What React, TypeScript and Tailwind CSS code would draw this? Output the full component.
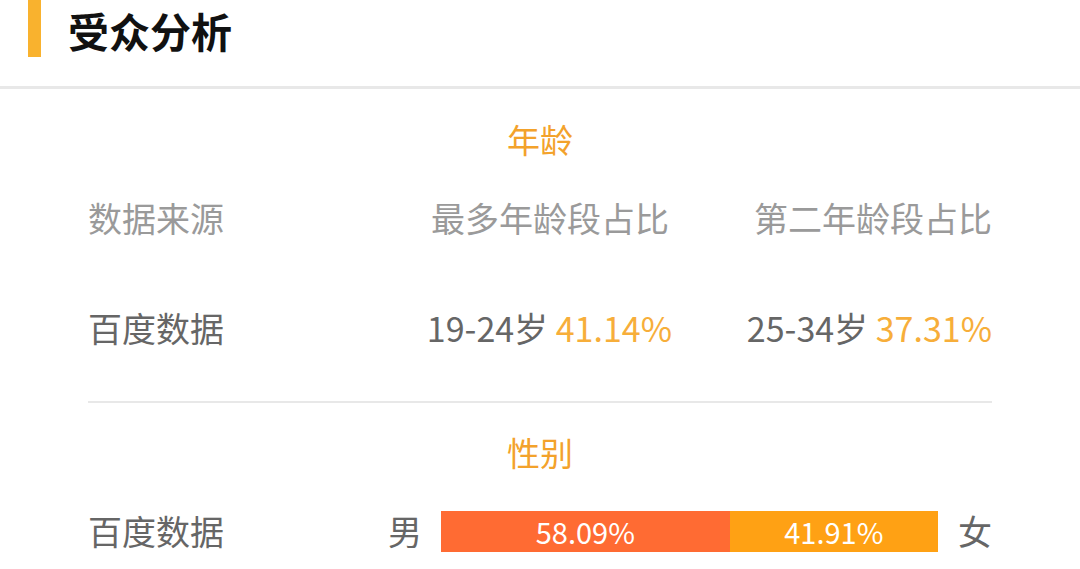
import React from 'react';

const font = { fontFamily: '"Noto Sans CJK SC", "Noto Sans", sans-serif' };

type AgeRow = { source: string; first: [string, string]; second: [string, string] };

const ageRows: AgeRow[] = [
  { source: '百度数据', first: ['19-24岁', '41.14%'], second: ['25-34岁', '37.31%'] },
];

const male = 58.09;
const female = 41.91;

export default function App() {
  return (
    <div className="w-[1080px] h-[569px] bg-white overflow-hidden" style={font}>
      {/* header */}
      <div className="h-[86px] flex items-start">
        <div className="ml-[28px] w-[13px] h-[57px] bg-[#f9b22e]" />
        <h1 className="ml-[27px] text-[41px] leading-[60px] font-bold text-[#111]">受众分析</h1>
      </div>
      <div className="h-[3px] bg-[#e8e8e8]" />

      <div className="px-[88px]">
        {/* age */}
        <div className="h-[102px] flex items-center justify-center">
          <span className="text-[33px] leading-tight text-[#f3a22b]">年龄</span>
        </div>
        <div className="grid grid-cols-[1fr_300px_320px] h-[54px] items-center text-[34px] leading-tight text-[#9a9a9a]">
          <span>数据来源</span>
          <span className="text-right pr-[3px]">最多年龄段占比</span>
          <span className="text-right">第二年龄段占比</span>
        </div>
        {ageRows.map((r) => (
          <div key={r.source} className="mt-[53px] grid grid-cols-[1fr_300px_320px] h-[60px] items-center text-[34px] leading-tight text-[#666]">
            <span>{r.source}</span>
            <span className="text-right">
              {r.first[0]} <span className="text-[#f7ae3a]">{r.first[1]}</span>
            </span>
            <span className="text-right">
              {r.second[0]} <span className="text-[#f7ae3a]">{r.second[1]}</span>
            </span>
          </div>
        ))}
        <div className="mt-[43px] h-[2px] bg-[#e8e8e8]" />

        {/* gender */}
        <div className="h-[100px] flex items-center justify-center">
          <span className="text-[33px] leading-tight text-[#f3a22b]">性别</span>
        </div>
        <div className="mt-[8px] h-[41px] flex items-center text-[34px] leading-tight text-[#666]">
          <span className="w-[300px]">百度数据</span>
          <span className="w-[33px]">男</span>
          <div className="ml-[20px] w-[497px] h-[41px] flex">
            <div className="h-full bg-[#ff6b33] flex items-center justify-center text-white text-[29px]" style={{ width: `${male}%` }}>
              {male.toFixed(2)}%
            </div>
            <div className="h-full bg-[#ffa114] flex items-center justify-center text-white text-[29px]" style={{ width: `${female}%` }}>
              {female.toFixed(2)}%
            </div>
          </div>
          <span className="ml-auto">女</span>
        </div>
      </div>
    </div>
  );
}
